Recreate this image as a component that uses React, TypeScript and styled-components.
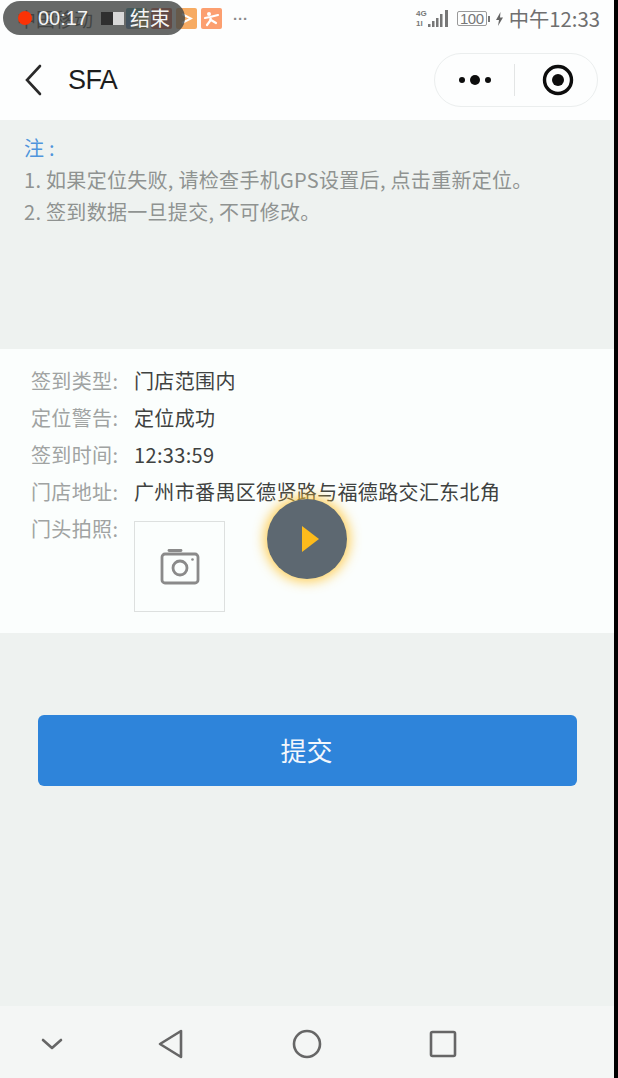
import styled, { createGlobalStyle } from "styled-components";

const GlobalStyle = createGlobalStyle`
  html, body {
    margin: 0;
    padding: 0;
    background: #000;
  }
`;

const CJK = `"Noto Sans CJK SC", "Noto Sans", sans-serif`;

const Screen = styled.div`
  position: relative;
  width: 614px;
  height: 1078px;
  display: flex;
  flex-direction: column;
  background: #eef2f0;
  font-family: ${CJK};
  overflow: hidden;
`;

const Header = styled.header`
  height: 120px;
  flex: none;
  background: #fdfefe;
  display: flex;
  flex-direction: column;
`;

const StatusBar = styled.div`
  height: 37px;
  display: flex;
  align-items: center;
  padding: 0 14px 0 17px;
`;

const Carrier = styled.span`
  width: 76px;
  font-size: 19px;
  line-height: 24px;
  color: #333;
  white-space: nowrap;
`;

const StatusIcons = styled.div`
  display: flex;
  align-items: center;
  gap: 4px;
  margin-left: 33px;
  margin-right: auto;
`;

const AppBadge = styled.span<{ $bg: string }>`
  width: 21px;
  height: 21px;
  border-radius: 2px;
  background: ${(p) => p.$bg};
  display: flex;
  align-items: center;
  justify-content: center;
`;

const More = styled.span`
  margin-left: 7px;
  font: 700 15px/1 "Liberation Sans", sans-serif;
  color: #8b8b8b;
`;

const StatusRight = styled.div`
  display: flex;
  align-items: center;
`;

const Battery = styled.span`
  width: 30px;
  height: 15px;
  box-sizing: border-box;
  margin-left: 7px;
  border: 1px solid #9a9a9a;
  border-radius: 2px;
  font: 15px/13px "Liberation Sans", sans-serif;
  letter-spacing: -0.5px;
  color: #777;
  text-align: center;
`;

const BatteryTip = styled.span`
  width: 2px;
  height: 6px;
  margin-left: 1px;
  background: #777;
`;

const Bolt = styled.svg`
  margin-left: 5px;
  fill: #666;
`;

const Clock = styled.span`
  margin-left: 5px;
  font-size: 20.3px;
  line-height: 24px;
  color: #6f6f6f;
  transform: translateY(-1px);
`;

const NavBar = styled.div`
  flex: 1;
  display: flex;
  align-items: center;
  padding: 2px 16px 0 24px;
`;

const Title = styled.h1`
  margin: 1px 0 0 24px;
  font: 400 27px/1 "Liberation Sans", sans-serif;
  letter-spacing: -0.6px;
  color: #1d1d1d;
`;

const Capsule = styled.div`
  margin-left: auto;
  width: 164px;
  height: 54px;
  box-sizing: border-box;
  border: 1px solid #ebeeee;
  border-radius: 27px;
  background: #fdfefe;
  display: flex;
  align-items: center;
`;

const CapsuleCell = styled.div<{ $shift?: number }>`
  flex: 1;
  display: flex;
  align-items: center;
  justify-content: center;
  padding-left: ${(p) => p.$shift ?? 0}px;
`;

const CapsuleDivider = styled.div`
  width: 1px;
  height: 32px;
  background: #e3e5e5;
`;

const Notes = styled.section`
  height: 229px;
  flex: none;
  box-sizing: border-box;
  padding: 12px 24px 0;
  font-size: 20px;
  letter-spacing: 0.3px;
  line-height: 32px;
  color: #8f9391;
`;

const NoteLabel = styled.div`
  color: #4f95dc;
`;

const Details = styled.section`
  height: 284px;
  flex: none;
  box-sizing: border-box;
  padding: 18px 31px 0;
  background: #fbfefd;
  font-size: 20px;
  letter-spacing: 0.35px;
  display: flex;
  flex-direction: column;
  gap: 9px;
`;

const Row = styled.div`
  display: flex;
  align-items: flex-start;
  line-height: 28px;
`;

const Label = styled.span`
  width: 103px;
  flex: none;
  color: #a0a3a2;
  white-space: nowrap;
`;

const Value = styled.span`
  color: #3f4241;
  white-space: nowrap;
`;

const PhotoBox = styled.div`
  width: 91px;
  height: 91px;
  margin-top: 6px;
  box-sizing: border-box;
  border: 1px solid #dde0df;
  display: flex;
  align-items: center;
  justify-content: center;
`;

const Actions = styled.div`
  flex: 1;
  padding: 82px 37px 0 38px;
`;

const SubmitButton = styled.button`
  width: 100%;
  height: 71px;
  border: 0;
  border-radius: 6px;
  background: #2e84da;
  color: #f2f7fc;
  font-family: ${CJK};
  font-size: 26px;
  padding: 0 2px 3px 0;
`;

const SystemNav = styled.nav`
  height: 72px;
  flex: none;
  box-sizing: border-box;
  background: #f4f6f5;
  display: grid;
  grid-template-columns: 102px repeat(3, 136px);
  justify-items: center;
  align-items: center;
  padding: 3px 0 0 1px;
  justify-content: start;
`;

const NavIcon = styled.svg`
  fill: none;
  stroke: #666;
  stroke-width: 2.6;
  stroke-linejoin: round;
  stroke-linecap: round;
`;

/* overlays from the screen recorder */
const RecorderPill = styled.div`
  position: absolute;
  left: 3px;
  top: 1px;
  width: 182px;
  height: 34px;
  border-radius: 17px;
  background: rgba(70, 72, 71, 0.82);
  display: flex;
  align-items: center;
  padding-left: 15px;
  box-sizing: border-box;
  color: #f4f4f4;
`;

const RecDot = styled.span`
  width: 14px;
  height: 14px;
  border-radius: 50%;
  background: #fb3206;
`;

const RecTime = styled.span`
  margin-left: 6px;
  font: 20px/1 "Liberation Sans", sans-serif;
`;

const StopSquare = styled.span`
  width: 23px;
  height: 13px;
  margin-left: 13px;
  background: linear-gradient(90deg, #2f2f2f 50%, #d8d8d8 50%);
`;

const EndLabel = styled.span`
  margin-left: 6px;
  font-size: 20px;
  line-height: 24px;
`;

const PlayButton = styled.div`
  position: absolute;
  left: 267px;
  top: 499px;
  width: 80px;
  height: 80px;
  border-radius: 50%;
  background: #5d6871;
  box-shadow: 0 0 12px 3px rgba(255, 196, 50, 0.8);
  display: flex;
  align-items: center;
  justify-content: center;
`;

const PlayTriangle = styled.span`
  margin-left: 7px;
  width: 0;
  height: 0;
  border-left: 17px solid #fdbb1c;
  border-top: 13px solid transparent;
  border-bottom: 13px solid transparent;
`;

const details = [
  { label: "签到类型:", value: "门店范围内" },
  { label: "定位警告:", value: "定位成功" },
  { label: "签到时间:", value: "12:33:59" },
  { label: "门店地址:", value: "广州市番禺区德贤路与福德路交汇东北角" },
];

export default function App() {
  return (
    <>
      <GlobalStyle />
      <Screen>
        <Header>
          <StatusBar>
            <Carrier>中国移动</Carrier>
            <StatusIcons>
              <AppBadge $bg="conic-gradient(#38a7a0, #f0c040, #3a7fd0, #38a7a0)" />
              <AppBadge $bg="#e4553f" />
              <AppBadge $bg="#f7ab62">
                <svg width="13" height="13" viewBox="0 0 13 13" fill="none" stroke="#fff" strokeWidth="2">
                  <path d="M2 2l9 4.500L2 11" />
                </svg>
              </AppBadge>
              <AppBadge $bg="#fc9f70">
                <svg width="17" height="17" viewBox="0 0 17 17" fill="none" stroke="#fff" strokeWidth="2.2" strokeLinecap="round">
                  <circle cx="6" cy="4" r="2" fill="#fff" stroke="none" />
                  <path d="M2 8l5-1 8-2M8 7l-1 4-3 4M8 10l5 3" />
                </svg>
              </AppBadge>
              <More>···</More>
            </StatusIcons>
            <StatusRight>
              <svg width="35" height="20" viewBox="0 0 35 20" fill="#777">
                <text x="1" y="7" fontSize="8" fontWeight="700" fontFamily="Liberation Sans">4G</text>
                <text x="1" y="17" fontSize="8" fontWeight="700" fontFamily="Liberation Sans">1l</text>
                <rect x="13" y="15" width="2.500" height="3" />
                <rect x="17" y="12" width="2.500" height="6" />
                <rect x="21" y="9" width="2.500" height="9" />
                <rect x="25" y="5" width="2.500" height="13" />
                <rect x="30" y="1" width="3" height="17" />
              </svg>
              <Battery>100</Battery>
              <BatteryTip />
              <Bolt width="9" height="14" viewBox="0 0 9 14">
                <path d="M5.500 0L1 8h3l-1 6 5-8.500H5z" />
              </Bolt>
              <Clock>中午12:33</Clock>
            </StatusRight>
          </StatusBar>
          <NavBar>
            <svg width="20" height="32" viewBox="0 0 20 32" fill="none" stroke="#2a2a2a" strokeWidth="2.600" strokeLinecap="round">
              <path d="M16 2L3 16l13 14" />
            </svg>
            <Title>SFA</Title>
            <Capsule>
              <CapsuleCell>
                <svg width="34" height="12" viewBox="0 0 34 12" fill="#0d0d0d">
                  <circle cx="4" cy="6" r="3" />
                  <circle cx="17" cy="6" r="5" />
                  <circle cx="30" cy="6" r="3" />
                </svg>
              </CapsuleCell>
              <CapsuleDivider />
              <CapsuleCell $shift={3}>
                <svg width="32" height="32" viewBox="0 0 32 32">
                  <circle cx="16" cy="16" r="13.500" fill="none" stroke="#0d0d0d" strokeWidth="3.400" />
                  <circle cx="16" cy="16" r="6" fill="#0d0d0d" />
                </svg>
              </CapsuleCell>
            </Capsule>
          </NavBar>
        </Header>

        <Notes>
          <NoteLabel>注 :</NoteLabel>
          <div>1. 如果定位失败, 请检查手机GPS设置后, 点击重新定位。</div>
          <div>2. 签到数据一旦提交, 不可修改。</div>
        </Notes>

        <Details>
          {details.map((item) => (
            <Row key={item.label}>
              <Label>{item.label}</Label>
              <Value>{item.value}</Value>
            </Row>
          ))}
          <Row>
            <Label>门头拍照:</Label>
            <PhotoBox>
              <svg width="40" height="38" viewBox="0 0 40 38" fill="none" stroke="#8a8a8a" strokeWidth="2.800" strokeLinejoin="round">
                <path d="M9 2.500h12" strokeLinecap="round" />
                <path d="M5 6h30a3 3 0 0 1 3 3v23a3 3 0 0 1-3 3H5a3 3 0 0 1-3-3V9a3 3 0 0 1 3-3z" />
                <circle cx="20" cy="20" r="7" />
                <circle cx="32.500" cy="11.500" r="1.300" fill="#8a8a8a" stroke="none" />
              </svg>
            </PhotoBox>
          </Row>
        </Details>

        <Actions>
          <SubmitButton>提交</SubmitButton>
        </Actions>

        <SystemNav>
          <NavIcon width="22" height="14" viewBox="0 0 22 14">
            <path d="M2 3l9 8 9-8" />
          </NavIcon>
          <NavIcon width="26" height="30" viewBox="0 0 26 30">
            <path d="M23 2v26L2 15z" />
          </NavIcon>
          <NavIcon width="30" height="30" viewBox="0 0 30 30">
            <circle cx="15" cy="15" r="13" />
          </NavIcon>
          <NavIcon width="28" height="28" viewBox="0 0 28 28">
            <rect x="2" y="2" width="24" height="24" rx="1.500" />
          </NavIcon>
        </SystemNav>

        <RecorderPill>
          <RecDot />
          <RecTime>00:17</RecTime>
          <StopSquare />
          <EndLabel>结束</EndLabel>
        </RecorderPill>

        <PlayButton>
          <PlayTriangle />
        </PlayButton>
      </Screen>
    </>
  );
}
